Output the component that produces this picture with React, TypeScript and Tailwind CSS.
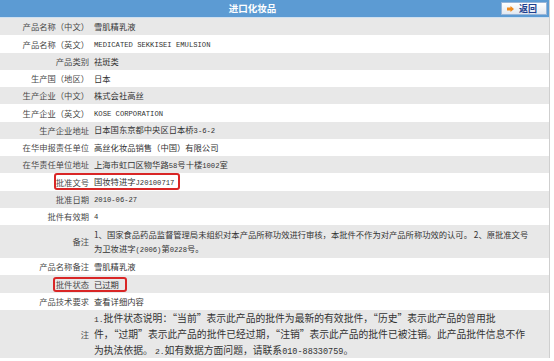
import type { ReactNode } from "react";

interface RowProps {
	label: string;
	gray?: boolean;
	className?: string;
	children?: ReactNode;
}

function Row({ label, gray = false, className = "h-[17.25px]", children }: RowProps) {
	return (
		<div className={`flex items-center ${gray ? "bg-[#e8e8e8]" : "bg-white"} ${className}`}>
			<div className="w-[90px] shrink-0 text-right pr-[1px] text-[#4a4a4a] whitespace-nowrap">{label}</div>
			<div className="flex-1 pl-[4px] text-[#333] whitespace-nowrap">{children}</div>
		</div>
	);
}

const Latin = ({ children }: { children: ReactNode }) => (
	<span className="font-['Liberation_Mono',monospace] text-[7.2px]">{children}</span>
);

export default function App() {
	return (
		<div className="relative w-[554px] h-[361px] bg-white overflow-hidden font-['Noto_Sans_CJK_SC',sans-serif] text-[8.3px] leading-none">
			<div className="w-[550px] border-r border-[#cfcfcf]">
				<div className="flex items-center h-[18px] bg-[#5c9bd3] border-b border-[#cfe0f0]">
					<div className="flex-1 text-center text-white font-bold text-[9.5px] pl-[4px]">进口化妆品</div>
					<button className="mr-[2px] flex items-center gap-[5px] h-[13px] w-[46px] pl-[5px] border border-[#9ab6d8] bg-gradient-to-b from-white to-[#e2e8f0] text-[#1d3f8f] font-bold text-[9px]">
						<svg width="7" height="6" viewBox="0 0 7 6">
							<path d="M0 1.5h3.5V0L7 3 3.5 6V4.5H0z" fill="#f08a1c" />
						</svg>
						<span>返回</span>
					</button>
				</div>

				<Row label="产品名称（中文）" gray>雪肌精乳液</Row>
				<Row label="产品名称（英文）">
					<Latin>MEDICATED SEKKISEI EMULSION</Latin>
				</Row>
				<Row label="产品类别" gray>祛斑类</Row>
				<Row label="生产国（地区）">日本</Row>
				<Row label="生产企业（中文）" gray>株式会社高丝</Row>
				<Row label="生产企业（英文）">
					<Latin>KOSE CORPORATION</Latin>
				</Row>
				<Row label="生产企业地址" gray>
					日本国东京都中央区日本桥<Latin>3-6-2</Latin>
				</Row>
				<Row label="在华申报责任单位">高丝化妆品销售（中国）有限公司</Row>
				<Row label="在华责任单位地址" gray>
					上海市虹口区物华路<Latin>58</Latin>号十楼<Latin>1002</Latin>室
				</Row>
				<Row label="批准文号">
					国妆特进字<Latin>J20100717</Latin>
				</Row>
				<Row label="批准日期" gray>
					<Latin>2010-06-27</Latin>
				</Row>
				<Row label="批件有效期">
					<Latin>4</Latin>
				</Row>
				<Row label="备注" gray className="h-[33px]">
					<div className="leading-[14px]">
						1、国家食品药品监督管理局未组织对本产品所称功效进行审核，本批件不作为对产品所称功效的认可。 2、原批准文号
						<br />
						为卫妆进字<Latin>(2006)</Latin>第<Latin>0228</Latin>号。
					</div>
				</Row>
				<Row label="产品名称备注">雪肌精乳液</Row>
				<Row label="批件状态" gray>已过期</Row>
				<Row label="产品技术要求">查看详细内容</Row>
				<Row label="注" gray className="h-[48px]">
					<div className="text-[9.8px] leading-[15.5px] text-[#333] pt-[3px]">
						<span className="font-['Liberation_Mono',monospace] text-[8px]">1.</span>批件状态说明：“当前”表示此产品的批件为最新的有效批件，“历史”表示此产品的曾用批
						<br />
						件，“过期”表示此产品的批件已经过期，“注销”表示此产品的批件已被注销。此产品批件信息不作
						<br />
						为执法依据。 <span className="font-['Liberation_Mono',monospace] text-[8px]">2.</span>如有数据方面问题，请联系
						<span className="font-['Liberation_Mono',monospace] text-[8.5px]">010-88330759</span>。
					</div>
				</Row>
			</div>

			<div className="absolute left-[54px] top-[173px] w-[126px] h-[17px] border-2 border-[#d92626] rounded-[3px]" />
			<div className="absolute left-[53px] top-[277px] w-[74px] h-[15px] border-2 border-[#d92626] rounded-[3px]" />
		</div>
	);
}
